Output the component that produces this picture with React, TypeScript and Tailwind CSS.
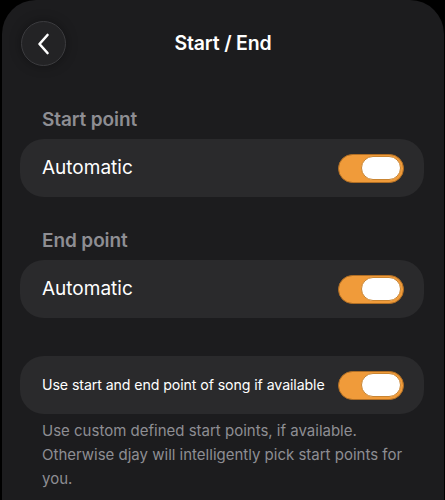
import React from "react";

function Toggle() {
  return (
    <div className="flex h-[29px] w-[66px] shrink-0 items-center justify-end rounded-full border border-[#b06e24] bg-[#f09b3a] p-[2px]">
      <div className="h-[24px] w-[40px] rounded-full border border-[#c98532] bg-white" />
    </div>
  );
}

function Row({ label, small }: { label: string; small?: boolean }) {
  return (
    <div className="flex h-[58px] items-center justify-between rounded-[24px] bg-[#2a2a2c] pl-[22px] pr-[20px]">
      <span
        className={
          small
            ? "whitespace-nowrap text-[14.2px] tracking-[-0.1px] text-white"
            : "whitespace-nowrap text-[19px] text-white"
        }
      >
        {label}
      </span>
      <Toggle />
    </div>
  );
}

export default function App() {
  return (
    <div
      className="flex h-[500px] w-[445px] bg-black pl-[2px] pr-[1px]"
      style={{ fontFamily: "Inter, 'Noto Sans', sans-serif" }}
    >
      <div className="flex flex-1 flex-col rounded-t-[34px] bg-[#1c1c1e] pt-[21px]">
        <div className="relative flex h-[45px] items-center justify-center">
          <div className="absolute left-[19px] top-0 flex h-[45px] w-[45px] items-center justify-center rounded-full border border-[#3c3c3f] bg-[#232325] shadow-[0_0_12px_rgba(0,0,0,0.35)]">
            <svg width="16" height="24" viewBox="0 0 16 24" fill="none">
              <path d="M11.5 3 L3.5 12 L11.5 21" stroke="white" strokeWidth="2.6" strokeLinecap="round" strokeLinejoin="round" />
            </svg>
          </div>
          <span className="text-[19.5px] font-semibold tracking-[-0.2px] text-white">Start / End</span>
        </div>

        <div className="flex flex-col pl-[18px] pr-[20px]">
          <div className="mt-[42px] pl-[22px] text-[19px] font-semibold leading-[24px] tracking-[-0.1px] text-[#8e8e93]">Start point</div>
          <div className="mt-[7px]">
            <Row label="Automatic" />
          </div>
          <div className="mt-[32px] pl-[22px] text-[19px] font-semibold leading-[24px] tracking-[-0.1px] text-[#8e8e93]">End point</div>
          <div className="mt-[7px]">
            <Row label="Automatic" />
          </div>
          <div className="mt-[38px]">
            <Row label="Use start and end point of song if available" small />
          </div>
          <div className="mt-[5px] pl-[22px] pr-[10px] text-[15px] leading-[24px] text-[#8e8e93]">
            Use custom defined start points, if available. Otherwise djay will intelligently pick start points for you.
          </div>
        </div>
      </div>
    </div>
  );
}
